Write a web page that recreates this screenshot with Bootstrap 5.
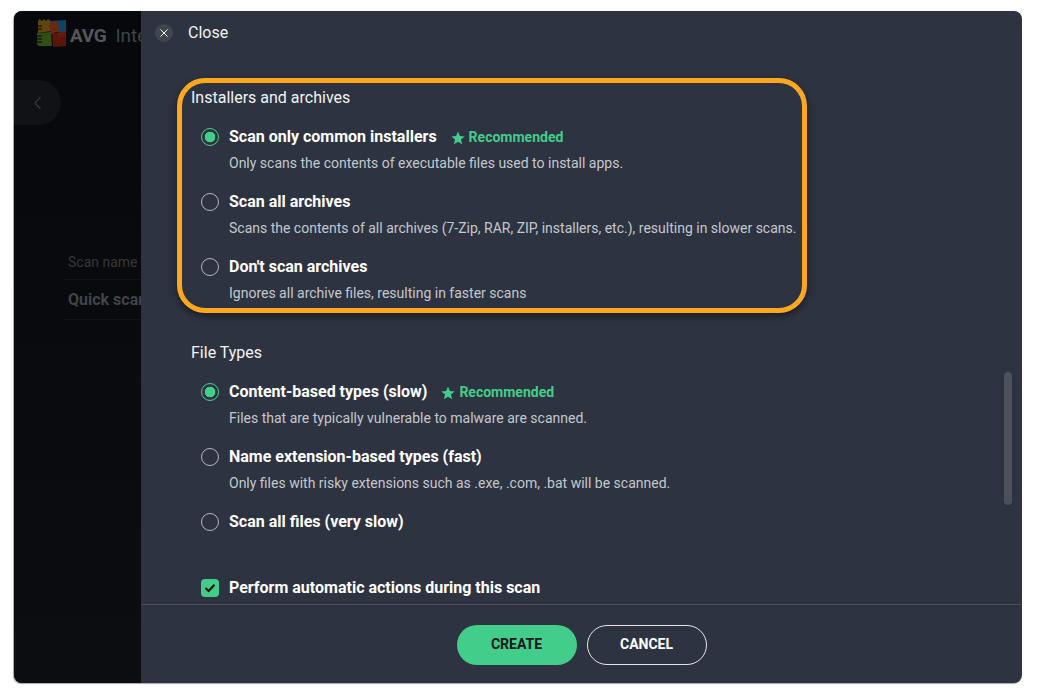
<!doctype html>
<html lang="en">
<head>
<meta charset="utf-8">
<meta name="viewport" content="width=device-width, initial-scale=1">
<title>Scan settings</title>
<link href="https://cdn.jsdelivr.net/npm/bootstrap@5.3.3/dist/css/bootstrap.min.css" rel="stylesheet">
<style>
html, body { height: 100%; margin: 0; background: #fff; overflow: hidden; }
body { font-family: Roboto, "Liberation Sans", sans-serif; padding: 11px 15px 14px 14px; }
.app-window { height: 672px; border-radius: 8px; overflow: hidden; background: #2d3340; box-shadow: -1px 1px 1px rgba(0,0,0,.35); }
.behind { width: 127px; flex: none; background: linear-gradient(#07080b, #0c0d10); overflow: hidden; color: #3f4145; }
.behind-top { height: 69px; padding: 7px 0 0 23px; white-space: nowrap; }
.behind-top svg { flex: none; }
.avg-word { font-size: 19px; font-weight: 700; letter-spacing: -.3px; color: #54565a; margin-left: 3px; }
.inte-word { font-size: 19px; color: #3e444b; margin-left: 9px; }
.back-pill { width: 47px; height: 45px; background: #101216; border-radius: 0 23px 23px 0; }
.scan-field { margin: 127px 0 0 50px; white-space: nowrap; }
.scan-label { font-size: 14px; line-height: 20px; padding: 0 0 7px 4px; border-bottom: 1px solid #121418; color: #36383c; }
.scan-value { font-size: 16px; line-height: 20px; font-weight: 700; padding: 10px 0 9px 4px; border-bottom: 1px solid #121418; color: #414347; }
.drawer { min-width: 0; position: relative; }
.drawer-head { height: 44px; flex: none; padding-left: 14px; color: #f2f3f5; font-size: 16px; }
.close-dot { width: 18px; height: 18px; border-radius: 50%; background: #41454f; margin-right: 15px; }
.drawer-body { flex: 1; min-height: 0; overflow: hidden; padding: 23px 0 0 36px; }
.highlight-box { width: 630px; height: 235px; margin-bottom: 30px; border: 5px solid #ffa81f; border-radius: 28px; padding: 5px 0 0 9px; box-shadow: 0 3px 7px rgba(0,0,0,.45); }
.plain-box { padding-left: 14px; }
.group-title { font-size: 16px; line-height: 20px; color: #f2f3f5; margin-bottom: 19px; }
.opt-row { height: 65px; margin-left: 10px; }
.opt-row .form-check-input { width: 18px; height: 18px; margin: 0; flex: none; background-color: transparent; border: 1.5px solid #b4b7bd; box-shadow: none; }
.opt-row .form-check-input:checked { border-color: #43cd8a; background-color: transparent; background-image: radial-gradient(circle, #43cd8a 0, #43cd8a 5px, transparent 5.6px); }
.opt-line { height: 20px; }
.opt-name { font-size: 16px; font-weight: 700; line-height: 20px; color: #fff; margin-left: 10px; }
.opt-desc { font-size: 14px; line-height: 18px; color: #c4c8ce; margin: 7px 0 0 28px; white-space: nowrap; }
.rec-tag { font-size: 14px; font-weight: 700; color: #43cd8a; margin-left: 14px; }
.rec-tag svg { margin-right: 4px; margin-top: 2px; }
.check-tick { width: 18px; height: 18px; border-radius: 4px; background: #43cd8a; }
.tick-row { margin-top: 1px; }
.drawer-foot { height: 79px; flex: none; border-top: 1px solid #4a4e59; gap: 10px; padding-top: 1px; }
.pill-btn { width: 120px; height: 40px; border-radius: 20px; font-size: 14px; font-weight: 700; padding: 0; }
.pill-create { background: #43cd8a; border: 0; color: #10161a; }
.pill-cancel { background: transparent; border: 1px solid #e6e7ea; color: #fff; }
.fake-scroll { position: absolute; right: 10px; top: 361px; width: 8px; height: 133px; border-radius: 4px; background: #4b505b; }
</style>
</head>
<body>
<div class="app-window d-flex">
  <div class="behind">
    <div class="behind-top d-flex align-items-start">
      <svg width="30" height="30" viewBox="0 0 30 30">
        <path d="M1 4 L2 1 L5 3 L7 1 L9 3 L11 1 L14 3 L15 13 L1 15 Z" fill="#5f4510"/>
        <path d="M13 3 L29 2 L29 15 L16 14 Z" fill="#0f4560"/>
        <path d="M0 15 L14 14 L15 28 L2 28 L0 26 Z" fill="#2f4d14"/>
        <path d="M15 15 L29 15 L29 28 L16 29 Z" fill="#5a1408"/>
        <path d="M12 5 L21 3 L22 13 L14 16 Z" fill="#6a2a10"/>
        <path d="M0 18 H5 M0 21 H5 M0 24 H5 M1 8 H5 M1 11 H5" stroke="#08090c" stroke-width="1"/>
        <path d="M20 15 L29 13 L27 18 L21 20 Z" fill="#6a1a0c"/>
      </svg>
      <span class="avg-word mt-1">AVG</span><span class="inte-word mt-1">Inte</span>
    </div>
    <div class="back-pill d-flex align-items-center justify-content-center">
      <svg width="10" height="14" viewBox="0 0 10 14"><path d="M7.5 1 L2 7 L7.5 13" fill="none" stroke="#34373b" stroke-width="1.2"/></svg>
    </div>
    <div class="scan-field">
      <div class="scan-label">Scan name</div>
      <div class="scan-value">Quick scan</div>
    </div>
  </div>

  <div class="drawer flex-grow-1 d-flex flex-column">
    <div class="drawer-head d-flex align-items-center">
      <span class="close-dot d-flex align-items-center justify-content-center">
        <svg width="8" height="8" viewBox="0 0 8 8"><path d="M.5 .5 L7.5 7.5 M7.5 .5 L.5 7.5" stroke="#fff" stroke-width="1"/></svg>
      </span>
      Close
    </div>

    <div class="drawer-body">
      <div class="highlight-box">
        <div class="group-title">Installers and archives</div>
        <div class="opt-row">
          <div class="opt-line d-flex align-items-center">
            <input class="form-check-input" type="radio" name="archives" checked>
            <span class="opt-name">Scan only common installers</span>
            <span class="rec-tag d-inline-flex align-items-center">
              <svg width="14" height="14" viewBox="0 0 14 14"><path d="M7 .5 L8.9 5 L13.6 5.4 L10 8.5 L11.1 13.3 L7 10.7 L2.9 13.3 L4 8.5 L.4 5.4 L5.1 5 Z" fill="#43cd8a"/></svg>
              Recommended
            </span>
          </div>
          <div class="opt-desc">Only scans the contents of executable files used to install apps.</div>
        </div>
        <div class="opt-row">
          <div class="opt-line d-flex align-items-center">
            <input class="form-check-input" type="radio" name="archives">
            <span class="opt-name">Scan all archives</span>
          </div>
          <div class="opt-desc">Scans the contents of all archives (7-Zip, RAR, ZIP, installers, etc.), resulting in slower scans.</div>
        </div>
        <div class="opt-row">
          <div class="opt-line d-flex align-items-center">
            <input class="form-check-input" type="radio" name="archives">
            <span class="opt-name">Don't scan archives</span>
          </div>
          <div class="opt-desc">Ignores all archive files, resulting in faster scans</div>
        </div>
      </div>

      <div class="plain-box">
        <div class="group-title">File Types</div>
        <div class="opt-row">
          <div class="opt-line d-flex align-items-center">
            <input class="form-check-input" type="radio" name="types" checked>
            <span class="opt-name">Content-based types (slow)</span>
            <span class="rec-tag d-inline-flex align-items-center">
              <svg width="14" height="14" viewBox="0 0 14 14"><path d="M7 .5 L8.9 5 L13.6 5.4 L10 8.5 L11.1 13.3 L7 10.7 L2.9 13.3 L4 8.5 L.4 5.4 L5.1 5 Z" fill="#43cd8a"/></svg>
              Recommended
            </span>
          </div>
          <div class="opt-desc">Files that are typically vulnerable to malware are scanned.</div>
        </div>
        <div class="opt-row">
          <div class="opt-line d-flex align-items-center">
            <input class="form-check-input" type="radio" name="types">
            <span class="opt-name">Name extension-based types (fast)</span>
          </div>
          <div class="opt-desc">Only files with risky extensions such as .exe, .com, .bat will be scanned.</div>
        </div>
        <div class="opt-row">
          <div class="opt-line d-flex align-items-center">
            <input class="form-check-input" type="radio" name="types">
            <span class="opt-name">Scan all files (very slow)</span>
          </div>
        </div>
        <div class="opt-row tick-row">
          <div class="opt-line d-flex align-items-center">
            <span class="check-tick d-flex align-items-center justify-content-center">
              <svg width="12" height="10" viewBox="0 0 12 10"><path d="M1.5 5 L4.6 8 L10.5 1.8" fill="none" stroke="#0b0f12" stroke-width="2"/></svg>
            </span>
            <span class="opt-name">Perform automatic actions during this scan</span>
          </div>
        </div>
      </div>
    </div>

    <div class="fake-scroll"></div>

    <div class="drawer-foot d-flex align-items-center justify-content-center">
      <button type="button" class="btn pill-btn pill-create">CREATE</button>
      <button type="button" class="btn pill-btn pill-cancel">CANCEL</button>
    </div>
  </div>
</div>
<script src="https://cdn.jsdelivr.net/npm/bootstrap@5.3.3/dist/js/bootstrap.bundle.min.js"></script>
</body>
</html>
